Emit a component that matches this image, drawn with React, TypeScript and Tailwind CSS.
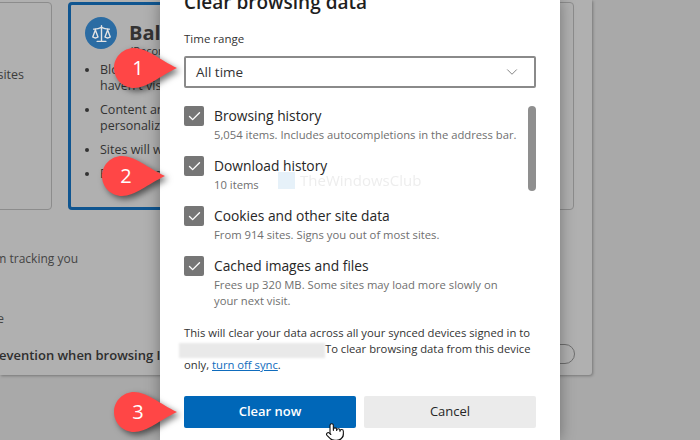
import { Check, ChevronDown, Pointer, Scale } from "lucide-react";

const items = [
  { title: "Browsing history", desc: "5,054 items. Includes autocompletions in the address bar." },
  { title: "Download history", desc: "10 items" },
  { title: "Cookies and other site data", desc: "From 914 sites. Signs you out of most sites." },
  { title: "Cached images and files", desc: "Frees up 320 MB. Some sites may load more slowly on your next visit." },
];

const Callout = ({ n, className }: { n: number; className: string }) => (
  <div className={`absolute h-[40px] w-[63px] ${className}`}>
    <svg width="63" height="40" viewBox="0 0 63 40" className="absolute left-0 top-0 drop-shadow-[3px_3px_3px_rgba(0,0,0,0.55)]">
      <path d="M20 0C33 0 46 12 63 20C46 28 33 40 20 40C9 40 0 31 0 20C0 9 9 0 20 0Z" fill="#ff4646" />
    </svg>
    <span className="absolute left-[12px] top-0 w-[24px] text-center text-[20px] leading-[40px] text-white">{n}</span>
  </div>
);

const Background = () => (
  <div className="flex h-[375px] w-[592px] flex-col rounded-br-[3px] bg-[#b0b0b0] pr-[17px] pt-[2px] shadow-[1px_1px_3px_rgba(0,0,0,0.3)]">
    <div className="-ml-[193px] flex h-[208px] shrink-0 gap-[16px]">
      <div className="flex w-[245px] shrink-0 justify-end rounded-[4px] border border-[#8c8c8c] pr-[27px] pt-[63px] text-[12.5px] text-[#3c3c3c]">sites</div>
      <div className="w-[245px] shrink-0 rounded-[4px] border-[3px] border-[#0f5590] pl-[14px] pt-[12px] text-[#333]">
        <div className="flex items-center gap-[12px]">
          <div className="flex h-[32px] w-[32px] items-center justify-center rounded-full bg-[#2b6ca3]">
            <Scale size={21} color="#e4e4e4" strokeWidth={1.6} />
          </div>
          <span className="text-[20px] font-bold">Balanced</span>
        </div>
        <div className="-mt-[5px] pl-[45px] text-[11px] leading-[14px]">(Recommended)</div>
        <ul className="mt-[4px] flex w-[225px] list-disc flex-col gap-[8px] pl-[15px] text-[12.5px] leading-[16px]">
          <li>Blocks trackers from sites you haven't visited</li>
          <li>Content and ads will likely be less personalized</li>
          <li>Sites will work as expected</li>
          <li>Blocks known harmful trackers</li>
        </ul>
      </div>
      <div className="w-[245px] shrink-0 rounded-[4px] border border-[#8c8c8c]" />
    </div>
    <div className="mt-[40px] flex h-[18px] shrink-0 items-center justify-between text-[12px] text-[#444]">
      <div className="flex w-[78px] justify-end whitespace-nowrap">Block sites from tracking you</div>
      <span className="mr-[15px] mb-[5px] text-[12px] leading-none">.</span>
    </div>
    <div className="mt-[42px] flex h-[18px] shrink-0 items-center justify-between text-[12px] text-[#444]">
      <div className="flex w-[4px] justify-end whitespace-nowrap">Learn more</div>
      <span className="mr-[15px] mb-[5px] text-[12px] leading-none">.</span>
    </div>
    <div className="mt-[16px] flex h-[20px] shrink-0 items-center justify-between">
      <div className="mt-[3px] whitespace-nowrap text-[13px] font-semibold text-[#2e2e2e]">
        <span className="-ml-[1px]">evention when browsing I</span>
      </div>
      <div className="h-[20px] w-[40px] rounded-full border border-[#6e6e6e]" />
    </div>
  </div>
);

export default function App() {
  return (
    <div className="relative h-[440px] w-[700px] overflow-hidden bg-[#a9a9a9] font-['Open_Sans',sans-serif]">
      <Background />

      <div className="absolute left-[160px] top-0 flex h-[440px] w-[400px] flex-col bg-white px-[24px] shadow-[0_0_14px_rgba(0,0,0,0.35)]">
        <h2 className="-mt-[11px] h-[26px] shrink-0 text-[19px] font-semibold leading-[26px] text-[#1f1f1f]">Clear browsing data</h2>
        <div className="mt-[16px] shrink-0 text-[11.5px] leading-[16px] text-[#333]">Time range</div>
        <div className="mt-[9px] flex h-[32px] shrink-0 items-center justify-between rounded-[2px] border-2 border-[#8a8a8a] pl-[10px] pr-[13px] text-[13.5px] text-[#333]">
          All time
          <ChevronDown size={18} color="#777" strokeWidth={1.2} />
        </div>

        <div className="relative mt-[18px] h-[219px] shrink-0">
          <div className="flex flex-col">
            {items.map((it) => (
              <div key={it.title} className="flex h-[50px] w-[340px] gap-[10px]">
                <div className="flex h-[20px] w-[20px] shrink-0 items-center justify-center rounded-[2px] bg-[#767676]">
                  <Check size={15} color="#fff" strokeWidth={2.2} />
                </div>
                <div>
                  <div className="text-[13.8px] font-medium leading-[20px] text-[#262626]">{it.title}</div>
                  <div className="mt-[1px] text-[11.25px] leading-[16px] text-[#6f6f6f]">{it.desc}</div>
                </div>
              </div>
            ))}
          </div>
          <div className="absolute right-0 top-0 h-[85px] w-[8px] rounded-full bg-[#8f8f8f]" />
        </div>

        <p className="shrink-0 whitespace-nowrap text-[11.25px] leading-[16px] text-[#333]">
          This will clear your data across all your synced devices signed in to
          <br />
          <span className="relative mr-[1px] inline-block h-[14px] w-[137px] align-middle">
            <span className="absolute -left-[5px] top-0 h-[15px] w-[146px] bg-[#e9e9e9] blur-[1px]" />
          </span>{" "}
          To clear browsing data from this device
          <br />
          only, <span className="text-[#0f6cbd] underline">turn off sync</span>.
        </p>

        <div className="mt-[23px] flex shrink-0 gap-[8px]">
          <button className="h-[32px] w-[172px] rounded-[2px] bg-[#0067b8] text-[13px] font-semibold text-white">Clear now</button>
          <button className="h-[32px] w-[172px] rounded-[2px] bg-[#ebebeb] text-[13px] font-medium text-[#262626]">Cancel</button>
        </div>
      </div>

      <div className="absolute left-[278px] top-[169px] flex items-center gap-[5px] opacity-60">
        <div className="h-[17px] w-[17px] bg-[#d6e9f6]" />
        <span className="text-[15px] text-[#e2e2e2]">TheWindowsClub</span>
      </div>

      <Callout n={1} className="left-[114px] top-[48px]" />
      <Callout n={2} className="left-[102px] top-[156px]" />
      <Callout n={3} className="left-[114px] top-[392px]" />

      <Pointer size={20} fill="#fff" color="#111" strokeWidth={1.3} className="absolute left-[325px] top-[422px]" />
    </div>
  );
}
